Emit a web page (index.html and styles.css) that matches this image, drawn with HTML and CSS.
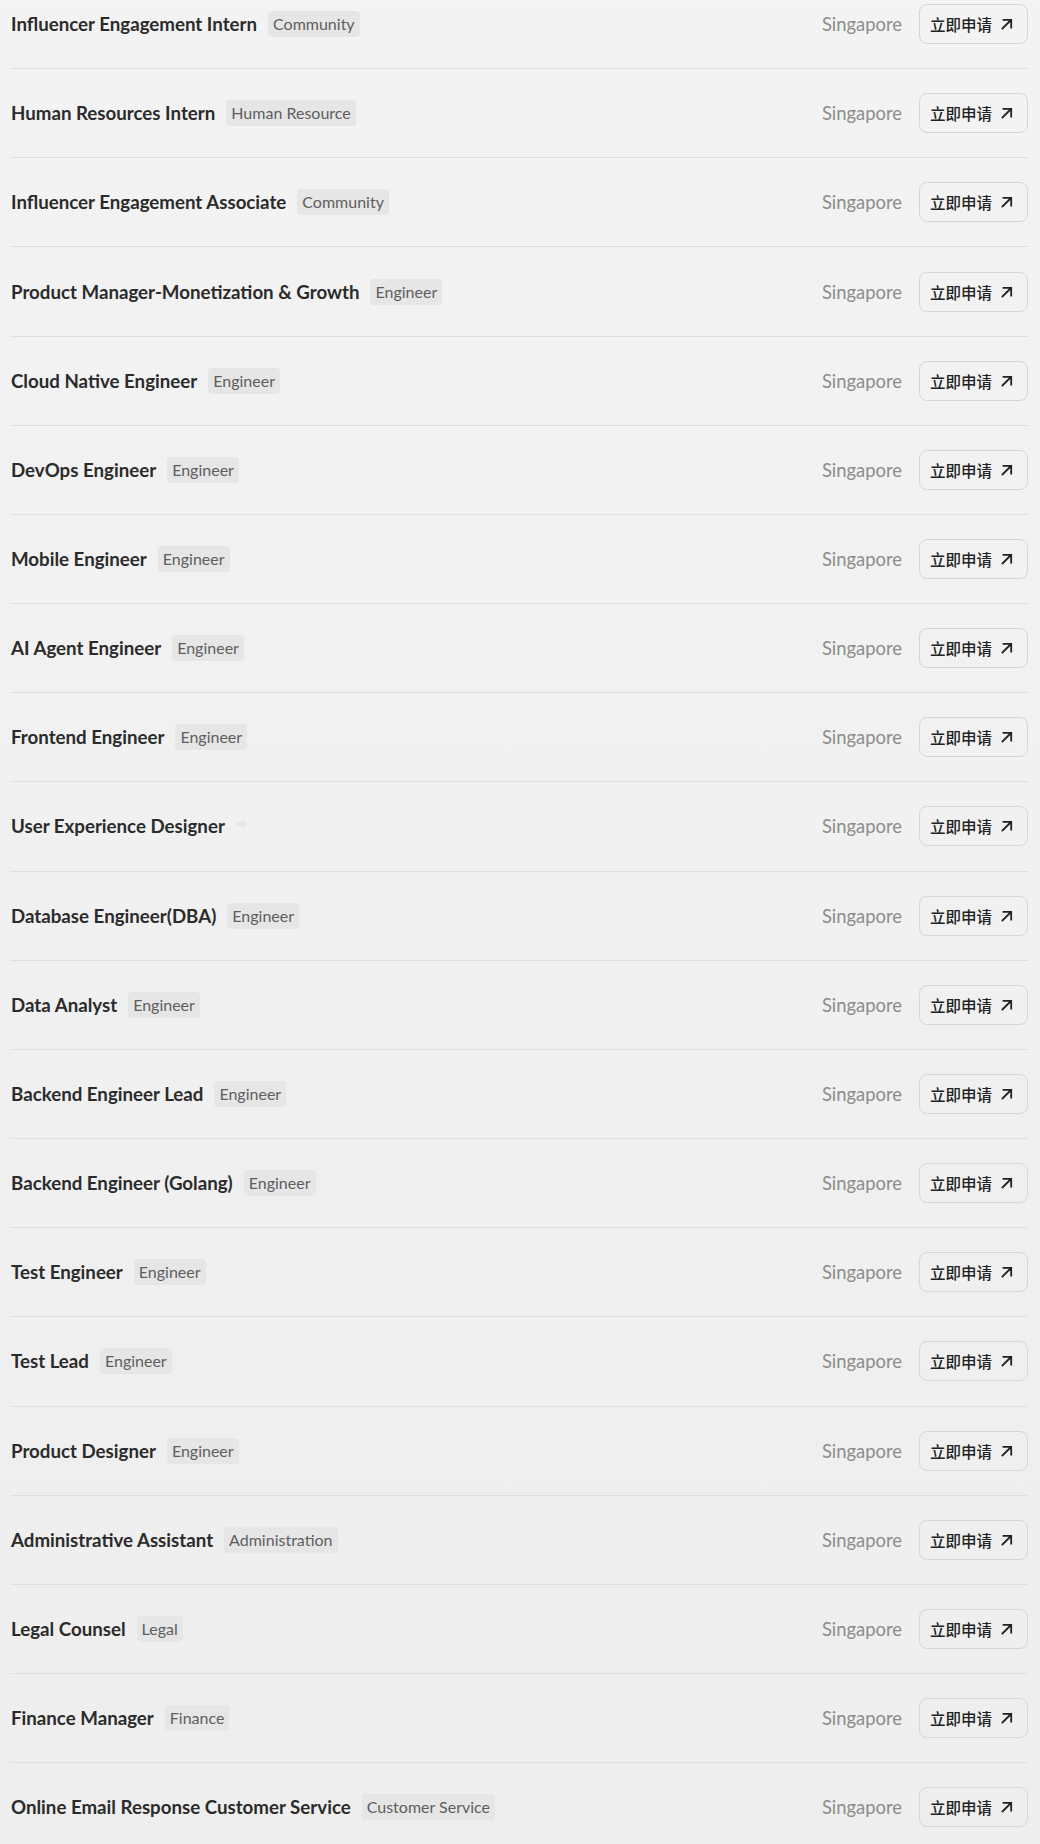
FILE: index.html
```html
<!DOCTYPE html>
<html lang="zh">
<head>
<meta charset="utf-8">
<link rel="stylesheet" href="styles.css">
</head>
<body>
<div class="list">
  <div class="row"><div class="left"><span class="title">Influencer Engagement Intern</span><span class="tag">Community</span></div><div class="right"><span class="loc">Singapore</span><a class="btn">立即申请<svg viewBox="0 0 12 12"><path d="M1.5 10.5 10 2M2.5 1.8h7.7v7.7"/></svg></a></div></div>
  <div class="row"><div class="left"><span class="title">Human Resources Intern</span><span class="tag">Human Resource</span></div><div class="right"><span class="loc">Singapore</span><a class="btn">立即申请<svg viewBox="0 0 12 12"><path d="M1.5 10.5 10 2M2.5 1.8h7.7v7.7"/></svg></a></div></div>
  <div class="row"><div class="left"><span class="title">Influencer Engagement Associate</span><span class="tag">Community</span></div><div class="right"><span class="loc">Singapore</span><a class="btn">立即申请<svg viewBox="0 0 12 12"><path d="M1.5 10.5 10 2M2.5 1.8h7.7v7.7"/></svg></a></div></div>
  <div class="row"><div class="left"><span class="title">Product Manager-Monetization &amp; Growth</span><span class="tag">Engineer</span></div><div class="right"><span class="loc">Singapore</span><a class="btn">立即申请<svg viewBox="0 0 12 12"><path d="M1.5 10.5 10 2M2.5 1.8h7.7v7.7"/></svg></a></div></div>
  <div class="row"><div class="left"><span class="title">Cloud Native Engineer</span><span class="tag">Engineer</span></div><div class="right"><span class="loc">Singapore</span><a class="btn">立即申请<svg viewBox="0 0 12 12"><path d="M1.5 10.5 10 2M2.5 1.8h7.7v7.7"/></svg></a></div></div>
  <div class="row"><div class="left"><span class="title">DevOps Engineer</span><span class="tag">Engineer</span></div><div class="right"><span class="loc">Singapore</span><a class="btn">立即申请<svg viewBox="0 0 12 12"><path d="M1.5 10.5 10 2M2.5 1.8h7.7v7.7"/></svg></a></div></div>
  <div class="row"><div class="left"><span class="title">Mobile Engineer</span><span class="tag">Engineer</span></div><div class="right"><span class="loc">Singapore</span><a class="btn">立即申请<svg viewBox="0 0 12 12"><path d="M1.5 10.5 10 2M2.5 1.8h7.7v7.7"/></svg></a></div></div>
  <div class="row"><div class="left"><span class="title">AI Agent Engineer</span><span class="tag">Engineer</span></div><div class="right"><span class="loc">Singapore</span><a class="btn">立即申请<svg viewBox="0 0 12 12"><path d="M1.5 10.5 10 2M2.5 1.8h7.7v7.7"/></svg></a></div></div>
  <div class="row"><div class="left"><span class="title">Frontend Engineer</span><span class="tag">Engineer</span></div><div class="right"><span class="loc">Singapore</span><a class="btn">立即申请<svg viewBox="0 0 12 12"><path d="M1.5 10.5 10 2M2.5 1.8h7.7v7.7"/></svg></a></div></div>
  <div class="row"><div class="left"><span class="title">User Experience Designer</span><span class="tag empty"></span></div><div class="right"><span class="loc">Singapore</span><a class="btn">立即申请<svg viewBox="0 0 12 12"><path d="M1.5 10.5 10 2M2.5 1.8h7.7v7.7"/></svg></a></div></div>
  <div class="row"><div class="left"><span class="title">Database Engineer(DBA)</span><span class="tag">Engineer</span></div><div class="right"><span class="loc">Singapore</span><a class="btn">立即申请<svg viewBox="0 0 12 12"><path d="M1.5 10.5 10 2M2.5 1.8h7.7v7.7"/></svg></a></div></div>
  <div class="row"><div class="left"><span class="title">Data Analyst</span><span class="tag">Engineer</span></div><div class="right"><span class="loc">Singapore</span><a class="btn">立即申请<svg viewBox="0 0 12 12"><path d="M1.5 10.5 10 2M2.5 1.8h7.7v7.7"/></svg></a></div></div>
  <div class="row"><div class="left"><span class="title">Backend Engineer Lead</span><span class="tag">Engineer</span></div><div class="right"><span class="loc">Singapore</span><a class="btn">立即申请<svg viewBox="0 0 12 12"><path d="M1.5 10.5 10 2M2.5 1.8h7.7v7.7"/></svg></a></div></div>
  <div class="row"><div class="left"><span class="title">Backend Engineer (Golang)</span><span class="tag">Engineer</span></div><div class="right"><span class="loc">Singapore</span><a class="btn">立即申请<svg viewBox="0 0 12 12"><path d="M1.5 10.5 10 2M2.5 1.8h7.7v7.7"/></svg></a></div></div>
  <div class="row"><div class="left"><span class="title">Test Engineer</span><span class="tag">Engineer</span></div><div class="right"><span class="loc">Singapore</span><a class="btn">立即申请<svg viewBox="0 0 12 12"><path d="M1.5 10.5 10 2M2.5 1.8h7.7v7.7"/></svg></a></div></div>
  <div class="row"><div class="left"><span class="title">Test Lead</span><span class="tag">Engineer</span></div><div class="right"><span class="loc">Singapore</span><a class="btn">立即申请<svg viewBox="0 0 12 12"><path d="M1.5 10.5 10 2M2.5 1.8h7.7v7.7"/></svg></a></div></div>
  <div class="row"><div class="left"><span class="title">Product Designer</span><span class="tag">Engineer</span></div><div class="right"><span class="loc">Singapore</span><a class="btn">立即申请<svg viewBox="0 0 12 12"><path d="M1.5 10.5 10 2M2.5 1.8h7.7v7.7"/></svg></a></div></div>
  <div class="row"><div class="left"><span class="title">Administrative Assistant</span><span class="tag">Administration</span></div><div class="right"><span class="loc">Singapore</span><a class="btn">立即申请<svg viewBox="0 0 12 12"><path d="M1.5 10.5 10 2M2.5 1.8h7.7v7.7"/></svg></a></div></div>
  <div class="row"><div class="left"><span class="title">Legal Counsel</span><span class="tag">Legal</span></div><div class="right"><span class="loc">Singapore</span><a class="btn">立即申请<svg viewBox="0 0 12 12"><path d="M1.5 10.5 10 2M2.5 1.8h7.7v7.7"/></svg></a></div></div>
  <div class="row"><div class="left"><span class="title">Finance Manager</span><span class="tag">Finance</span></div><div class="right"><span class="loc">Singapore</span><a class="btn">立即申请<svg viewBox="0 0 12 12"><path d="M1.5 10.5 10 2M2.5 1.8h7.7v7.7"/></svg></a></div></div>
  <div class="row"><div class="left"><span class="title">Online Email Response Customer Service</span><span class="tag">Customer Service</span></div><div class="right"><span class="loc">Singapore</span><a class="btn">立即申请<svg viewBox="0 0 12 12"><path d="M1.5 10.5 10 2M2.5 1.8h7.7v7.7"/></svg></a></div></div>
</div>
</body>
</html>
```
FILE: styles.css
```css
html, body {
  margin: 0;
  padding: 0;
}
body {
  background: linear-gradient(180deg, #f3f3f3 0%, #eeeeee 100%);
  min-height: 1844px;
  font-family: "Lato", "Noto Sans CJK SC", sans-serif;
  color: #2b2b2b;
  overflow: hidden;
}
.list {
  margin-top: -20px;
  padding: 0 12px 0 10px;
}
.row {
  display: flex;
  align-items: center;
  justify-content: space-between;
  padding: 24.08px 0;
  border-bottom: 1px solid #dfdfdf;
}
.left {
  display: flex;
  align-items: center;
  gap: 11px;
  padding-left: 1px;
}
.title {
  font-size: 18.7px;
  font-weight: 700;
  color: #2b2b2b;
}
.tag {
  font-size: 16px;
  color: #5e5e5e;
  background: #e6e6e6;
  border-radius: 4px;
  padding: 3px 5px;
  line-height: 20px;
}
.tag.empty {
  padding: 3px 5px;
  line-height: 0;
  height: 0;
  width: 0;
  margin-top: -4px;
}
.right {
  display: flex;
  align-items: center;
  gap: 17px;
}
.loc {
  font-size: 18.4px;
  color: #8c8c8c;
}
.btn {
  display: flex;
  align-items: center;
  gap: 9px;
  height: 38px;
  padding: 0 14px 0 10px;
  border: 1px solid #d6d6d6;
  border-radius: 8px;
  font-family: "Noto Sans CJK SC", sans-serif;
  font-size: 15.5px;
  font-weight: 500;
  color: #222;
  box-sizing: content-box;
}
.btn svg {
  width: 12px;
  height: 12px;
  fill: none;
  stroke: #222;
  stroke-width: 1.8;
  stroke-linecap: square;
}
```
